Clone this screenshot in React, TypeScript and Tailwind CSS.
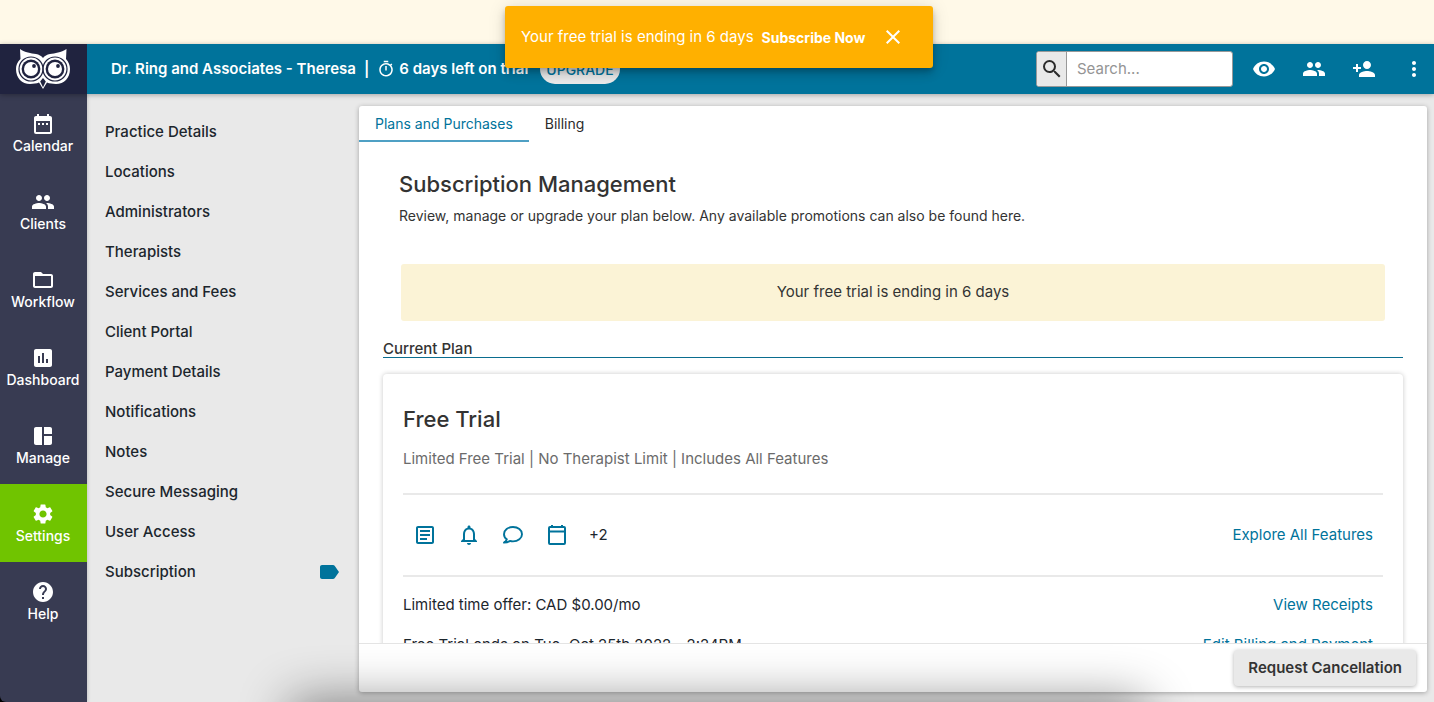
import { useState } from 'react';
import type { IconType } from 'react-icons';
import {
  MdAssessment,
  MdClose,
  MdDateRange,
  MdFolderOpen,
  MdHelp,
  MdLabel,
  MdMoreVert,
  MdNotificationsNone,
  MdOutlineArticle,
  MdOutlineTimer,
  MdPeople,
  MdPersonAdd,
  MdSearch,
  MdSettings,
  MdSpaceDashboard,
  MdVisibility,
} from 'react-icons/md';

interface NavItem {
  label: string;
  icon: IconType;
}

const mainNav: NavItem[] = [
  { label: 'Calendar', icon: MdDateRange },
  { label: 'Clients', icon: MdPeople },
  { label: 'Workflow', icon: MdFolderOpen },
  { label: 'Dashboard', icon: MdAssessment },
  { label: 'Manage', icon: MdSpaceDashboard },
  { label: 'Settings', icon: MdSettings },
  { label: 'Help', icon: MdHelp },
];

const settingsNav = [
  'Practice Details',
  'Locations',
  'Administrators',
  'Therapists',
  'Services and Fees',
  'Client Portal',
  'Payment Details',
  'Notifications',
  'Notes',
  'Secure Messaging',
  'User Access',
  'Subscription',
];

const headerActions: NavItem[] = [
  { label: 'Preview', icon: MdVisibility },
  { label: 'Clients', icon: MdPeople },
  { label: 'Add client', icon: MdPersonAdd },
  { label: 'More', icon: MdMoreVert },
];

function OwlLogo() {
  return (
    <svg width="54" height="40" viewBox="0 0 54 40" aria-hidden="true">
      <path
        fill="#fff"
        d="M4 0C9 3.6 15 4.4 20 5c3 .6 5.400 1.900 7 4 1.600-2.100 4-3.400 7-4 5-.6 11-1.400 16.500-5L50 10c2.700 3 4 6 4 10 0 9-6 15-14 15-3.500 0-6.500-.4-9-1.400L27 40l-4-6.400c-2.500 1-5.500 1.400-9 1.400C6 35 0 29 0 20c0-4 1.300-7 4.500-10z"
      />
      {[15, 39].map((cx) => (
        <g key={cx}>
          <circle cx={cx} cy="20" r="12" fill="none" stroke="#20233f" strokeWidth="1.200" />
          <circle cx={cx} cy="20" r="9.400" fill="#20233f" />
          <circle cx={cx} cy="20" r="7" fill="#fff" />
          <circle cx={cx + 3} cy="17" r="1.900" fill="#20233f" />
        </g>
      ))}
      <path fill="#20233f" d="M27 29l2.800 3.500L27 38.200l-2.800-5.700z" />
    </svg>
  );
}

function ChatIcon() {
  return (
    <svg width="24" height="24" viewBox="0 0 24 24" fill="none" stroke="currentColor" strokeWidth="1.900" aria-hidden="true">
      <path
        strokeLinejoin="round"
        d="M5.800 16.300C4 15 3 13.200 3 11.200 3 7.200 7 4 12 4s9 3.200 9 7.200-4 7.200-9 7.200c-1.100 0-2.200-.2-3.200-.5-1.400 1-3.100 1.600-5.800 1.700 1.300-.8 2.200-1.900 2.800-3.300z"
      />
    </svg>
  );
}

function CalendarIcon() {
  return (
    <svg width="24" height="24" viewBox="0 0 24 24" fill="none" stroke="currentColor" strokeWidth="2" aria-hidden="true">
      <rect x="4" y="4" width="16" height="17" rx="1" />
      <path d="M4 8.500h16M7 2v3M17 2v3" />
    </svg>
  );
}

export default function App() {
  const [tab, setTab] = useState('Plans and Purchases');
  const [showAlert, setShowAlert] = useState(true);

  return (
    <div className="relative flex h-screen flex-col overflow-hidden bg-[#e9e9e9] font-[Inter,sans-serif] text-[15px] text-[#1c262d]">
      <div className="h-11 shrink-0 bg-[#fff9e8]" />

      {/* Top bar */}
      <header className="relative z-10 flex h-[50px] shrink-0 items-center bg-[#00739b] text-white shadow-[0_1px_5px_rgba(0,0,0,0.3)]">
        <a href="#home" aria-label="Home" className="flex h-full w-[87px] items-center justify-center bg-[#20233f] pr-px">
          <OwlLogo />
        </a>
        <div className="flex items-center pl-6 font-semibold">
          <span>Dr. Ring and Associates - Theresa</span>
          <span className="px-2">|</span>
          <MdOutlineTimer className="mr-1 size-[18px]" />
          <span>6 days left on trial</span>
          <button type="button" className="ml-3 h-[30px] rounded-full bg-[#e9e9e9] px-1.5 text-[14px] font-medium text-[#00739b]">
            UPGRADE
          </button>
        </div>
        <form className="ml-auto flex h-9 w-[197px] overflow-hidden rounded-[3px] border border-[#999] bg-white">
          <button type="submit" aria-label="Search" className="flex w-[30px] shrink-0 items-center justify-center border-r border-[#999] bg-[#e9e9e9] text-[#2c2c2c]">
            <MdSearch className="size-6" />
          </button>
          <input
            type="text"
            aria-label="Search"
            placeholder="Search..."
            className="w-full min-w-0 px-2.5 text-[15px] text-[#333] outline-none placeholder:text-[#949494]"
          />
        </form>
        <div className="ml-[19px] flex gap-[26px] pr-2">
          {headerActions.map(({ label, icon: Icon }) => (
            <button key={label} type="button" aria-label={label}>
              <Icon className="size-6" />
            </button>
          ))}
        </div>
      </header>

      <div className="flex min-h-0 flex-1">
        {/* Main navigation */}
        <div className="flex w-[87px] shrink-0 bg-black shadow-[1px_0_3px_rgba(0,0,0,0.15)]">
          <nav className="flex-1 rounded-bl-md bg-[#383b52] text-[14px] leading-5 font-medium text-white">
            {mainNav.map(({ label, icon: Icon }) => (
              <a
                key={label}
                href={`#${label.toLowerCase()}`}
                className={`flex h-[78px] flex-col items-center pt-[18px] pr-px ${label === 'Settings' ? 'bg-[#70c400]' : ''}`}
              >
                <Icon className="size-6" />
                {label}
              </a>
            ))}
          </nav>
        </div>

        {/* Settings navigation */}
        <nav className="w-[272px] shrink-0 px-[18px] pt-[18px] font-medium">
          {settingsNav.map((item) => (
            <a key={item} href="#settings" className="flex h-10 items-center justify-between">
              {item}
              {item === 'Subscription' && <MdLabel className="size-6 text-[#00739b]" />}
            </a>
          ))}
        </nav>

        <main className="mt-3 mr-[7px] mb-2.5 flex min-w-0 flex-1 flex-col rounded-[3px] bg-white shadow-[0_1px_5px_rgba(0,0,0,0.3)]">
          <div role="tablist" className="flex h-9 shrink-0 text-[14px] text-[#2c2c2c]">
            {['Plans and Purchases', 'Billing'].map((name) => (
              <button
                key={name}
                type="button"
                role="tab"
                aria-selected={tab === name}
                onClick={() => setTab(name)}
                className={`border-b-2 px-4 ${tab === name ? 'border-[#4fa0c4] text-[#00739b]' : 'border-transparent'}`}
              >
                {name}
              </button>
            ))}
          </div>

          <div className="min-h-0 flex-1 overflow-y-auto px-6 [scrollbar-width:none]">
            <div className="px-4 pt-[26px] text-[#333]">
              <h1 className="text-[22px] leading-8 font-medium">Subscription Management</h1>
              <p className="mt-1 text-[14px] leading-6">
                Review, manage or upgrade your plan below. Any available promotions can also be found here.
              </p>
            </div>
            <p className="mx-[18px] mt-9 flex h-[57px] items-center justify-center rounded-[3px] bg-[#fbf3d6] text-[#333]">
              Your free trial is ending in 6 days
            </p>

            <h2 className="mt-5 border-b border-[#0a6d8f] leading-4 font-medium text-[#333]">Current Plan</h2>

            <section className="mt-4 rounded-sm px-5 pt-[29px] pb-5 shadow-[0_0_5px_rgba(0,0,0,0.22)]">
              <h3 className="text-[22px] leading-8 font-medium text-[#333]">Free Trial</h3>
              <p className="mt-3 leading-6 text-[#6b6b6b]">
                Limited Free Trial | No Therapist Limit | Includes All Features
              </p>
              <hr className="mt-[22px] border-t-2 border-[#e9e9e9]" />
              <div className="flex h-20 items-center gap-5 px-2.5">
                <div className="flex gap-5 text-[#00739b]">
                  <MdOutlineArticle className="size-6" />
                  <MdNotificationsNone className="size-6" />
                  <ChatIcon />
                  <CalendarIcon />
                </div>
                <span>+2</span>
                <a href="#features" className="ml-auto text-[#00739b]">Explore All Features</a>
              </div>
              <hr className="border-t-2 border-[#e9e9e9]" />
              <div className="mt-2 flex h-10 items-center justify-between pr-2.5">
                <span>Limited time offer: CAD $0.00/mo</span>
                <a href="#receipts" className="text-[#00739b]">View Receipts</a>
              </div>
              <div className="flex h-10 items-center justify-between pr-2.5">
                <span>Free Trial ends on Tue, Oct 25th 2022 - 2:24PM</span>
                <a href="#billing" className="text-[#00739b]">Edit Billing and Payment</a>
              </div>
            </section>
          </div>

          <footer className="flex h-[49px] shrink-0 items-center justify-end border-t border-[#e4e4e4] pr-[11px]">
            <button type="button" className="h-9 rounded-sm bg-[#e9e9e9] px-3.5 font-semibold text-[#333] shadow-[0_1px_4px_rgba(0,0,0,0.3)]">
              Request Cancellation
            </button>
          </footer>
        </main>
      </div>

      {/* Snackbar */}
      {showAlert && (
        <div className="absolute inset-x-0 top-1.5 z-20 flex justify-center pl-1">
          <div role="status" className="flex h-[62px] w-[428px] items-center rounded-[3px] bg-[#ffb000] px-4 text-white shadow-[0_3px_5px_-1px_rgba(0,0,0,0.2),0_6px_10px_rgba(0,0,0,0.14),0_1px_18px_rgba(0,0,0,0.12)]">
            <span className="text-[15px]">Your free trial is ending in 6 days</span>
            <a href="#subscribe" className="ml-2 text-[14px] font-bold">Subscribe Now</a>
            <button type="button" aria-label="Close" onClick={() => setShowAlert(false)} className="mr-3 ml-auto">
              <MdClose className="size-6" />
            </button>
          </div>
        </div>
      )}

      {/* Soft shade rising from the bottom edge */}
      <div className="pointer-events-none absolute inset-x-[300px] -bottom-12 z-20 h-10 shadow-[0_0_50px_10px_rgba(0,0,0,0.45)]" />
    </div>
  );
}
